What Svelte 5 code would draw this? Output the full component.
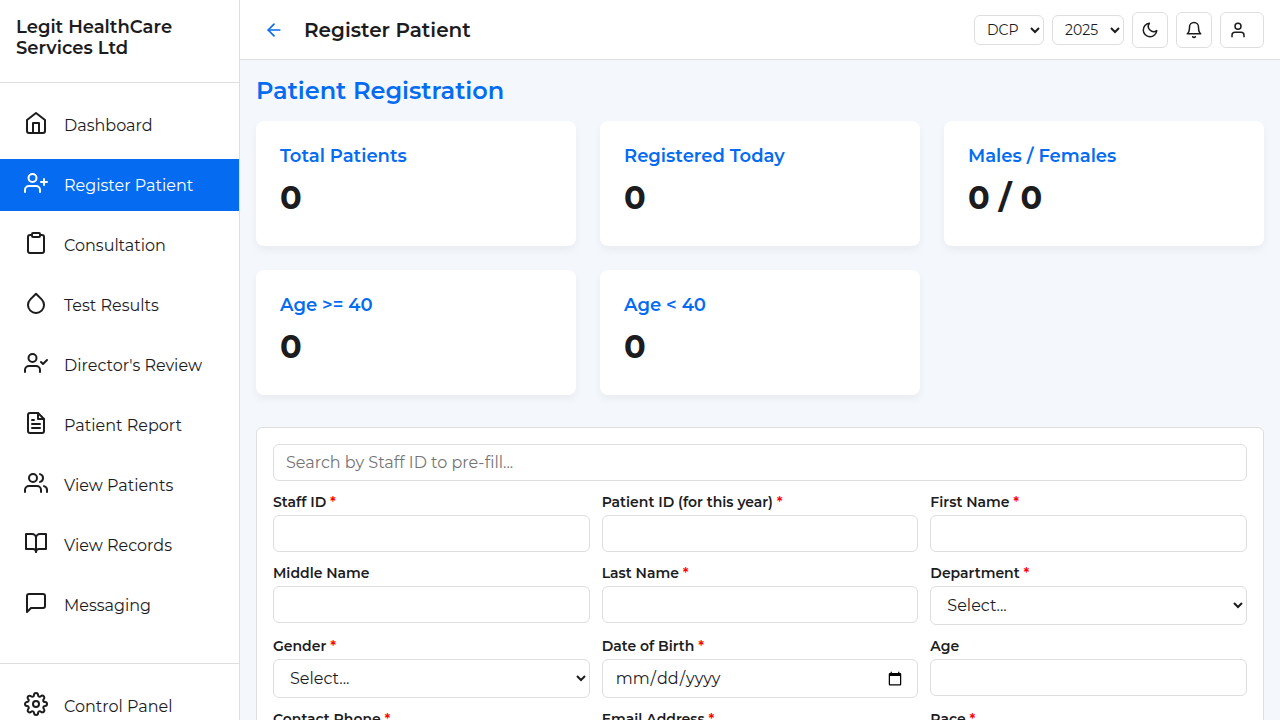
<script>
  const icons = {
    home: '<path d="M3 9l9-7 9 7v11a2 2 0 0 1-2 2H5a2 2 0 0 1-2-2z"/><polyline points="9 22 9 12 15 12 15 22"/>',
    userPlus: '<path d="M16 21v-2a4 4 0 0 0-4-4H5a4 4 0 0 0-4 4v2"/><circle cx="8.5" cy="7" r="4"/><line x1="20" y1="8" x2="20" y2="14"/><line x1="23" y1="11" x2="17" y2="11"/>',
    clipboard: '<path d="M16 4h2a2 2 0 0 1 2 2v14a2 2 0 0 1-2 2H6a2 2 0 0 1-2-2V6a2 2 0 0 1 2-2h2"/><rect x="8" y="2" width="8" height="4" rx="1" ry="1"/>',
    droplet: '<path d="M12 2.69l5.66 5.66a8 8 0 1 1-11.31 0z"/>',
    userCheck: '<path d="M16 21v-2a4 4 0 0 0-4-4H5a4 4 0 0 0-4 4v2"/><circle cx="8.5" cy="7" r="4"/><polyline points="17 11 19 13 23 9"/>',
    file: '<path d="M14 2H6a2 2 0 0 0-2 2v16a2 2 0 0 0 2 2h12a2 2 0 0 0 2-2V8z"/><polyline points="14 2 14 8 20 8"/><line x1="16" y1="13" x2="8" y2="13"/><line x1="16" y1="17" x2="8" y2="17"/><polyline points="10 9 9 9 8 9"/>',
    users: '<path d="M17 21v-2a4 4 0 0 0-4-4H5a4 4 0 0 0-4 4v2"/><circle cx="9" cy="7" r="4"/><path d="M23 21v-2a4 4 0 0 0-3-3.87"/><path d="M16 3.13a4 4 0 0 1 0 7.75"/>',
    book: '<path d="M2 3h6a4 4 0 0 1 4 4v14a3 3 0 0 0-3-3H2z"/><path d="M22 3h-6a4 4 0 0 0-4 4v14a3 3 0 0 1 3-3h7z"/>',
    message: '<path d="M21 15a2 2 0 0 1-2 2H7l-4 4V5a2 2 0 0 1 2-2h14a2 2 0 0 1 2 2z"/>',
    settings: '<circle cx="12" cy="12" r="3"/><path d="M19.4 15a1.65 1.65 0 0 0 .33 1.82l.06.06a2 2 0 0 1 0 2.83 2 2 0 0 1-2.83 0l-.06-.06a1.65 1.65 0 0 0-1.82-.33 1.65 1.65 0 0 0-1 1.51V21a2 2 0 0 1-2 2 2 2 0 0 1-2-2v-.09A1.65 1.65 0 0 0 9 19.4a1.65 1.65 0 0 0-1.82.33l-.06.06a2 2 0 0 1-2.83 0 2 2 0 0 1 0-2.83l.06-.06a1.65 1.65 0 0 0 .33-1.82 1.65 1.65 0 0 0-1.51-1H3a2 2 0 0 1-2-2 2 2 0 0 1 2-2h.09A1.65 1.65 0 0 0 4.6 9a1.65 1.65 0 0 0-.33-1.82l-.06-.06a2 2 0 0 1 0-2.83 2 2 0 0 1 2.83 0l.06.06a1.65 1.65 0 0 0 1.82.33H9a1.65 1.65 0 0 0 1-1.51V3a2 2 0 0 1 2-2 2 2 0 0 1 2 2v.09a1.65 1.65 0 0 0 1 1.51 1.65 1.65 0 0 0 1.82-.33l.06-.06a2 2 0 0 1 2.83 0 2 2 0 0 1 0 2.83l-.06.06a1.65 1.65 0 0 0-.33 1.82V9a1.65 1.65 0 0 0 1.51 1H21a2 2 0 0 1 2 2 2 2 0 0 1-2 2h-.09a1.65 1.65 0 0 0-1.51 1z"/>',
    back: '<line x1="19" y1="12" x2="5" y2="12"/><polyline points="12 19 5 12 12 5"/>',
    moon: '<path d="M21 12.79A9 9 0 1 1 11.21 3 7 7 0 0 0 21 12.79z"/>',
    bell: '<path d="M18 8A6 6 0 0 0 6 8c0 7-3 9-3 9h18s-3-2-3-9"/><path d="M13.73 21a2 2 0 0 1-3.46 0"/>',
    user: '<path d="M20 21v-2a4 4 0 0 0-4-4H8a4 4 0 0 0-4 4v2"/><circle cx="12" cy="7" r="4"/>'
  };

  const nav = [
    { label: 'Dashboard', icon: 'home' },
    { label: 'Register Patient', icon: 'userPlus' },
    { label: 'Consultation', icon: 'clipboard' },
    { label: 'Test Results', icon: 'droplet' },
    { label: "Director's Review", icon: 'userCheck' },
    { label: 'Patient Report', icon: 'file' },
    { label: 'View Patients', icon: 'users' },
    { label: 'View Records', icon: 'book' },
    { label: 'Messaging', icon: 'message' }
  ];
  const active = 'Register Patient';

  const stats = [
    { title: 'Total Patients', value: '0' },
    { title: 'Registered Today', value: '0' },
    { title: 'Males / Females', value: '0 / 0' },
    { title: 'Age >= 40', value: '0' },
    { title: 'Age < 40', value: '0' }
  ];

  const fields = [
    { id: 'staff-id', label: 'Staff ID', type: 'text', required: true },
    { id: 'patient-id', label: 'Patient ID (for this year)', type: 'text', required: true },
    { id: 'first-name', label: 'First Name', type: 'text', required: true },
    { id: 'middle-name', label: 'Middle Name', type: 'text' },
    { id: 'last-name', label: 'Last Name', type: 'text', required: true },
    { id: 'department', label: 'Department', type: 'select', required: true },
    { id: 'gender', label: 'Gender', type: 'select', required: true },
    { id: 'dob', label: 'Date of Birth', type: 'date', required: true },
    { id: 'age', label: 'Age', type: 'text' },
    { id: 'phone', label: 'Contact Phone', type: 'text', required: true },
    { id: 'email', label: 'Email Address', type: 'email', required: true },
    { id: 'race', label: 'Race', type: 'select', required: true }
  ];
</script>

{#snippet icon(name, size)}
  <svg class="icon" width={size} height={size} viewBox="0 0 24 24" aria-hidden="true">{@html icons[name]}</svg>
{/snippet}

<div class="app">
  <aside class="sidebar">
    <div class="brand"><h2>Legit HealthCare Services Ltd</h2></div>
    <nav class="nav">
      {#each nav as item}
        <a href="#{item.icon}" class="nav-item" class:active={item.label === active}>
          <span class="nav-icon">{@render icon(item.icon, 24)}</span>
          <span>{item.label}</span>
        </a>
      {/each}
    </nav>
    <div class="nav nav-footer">
      <a href="#settings" class="nav-item">
        <span class="nav-icon">{@render icon('settings', 24)}</span>
        <span>Control Panel</span>
      </a>
    </div>
  </aside>

  <div class="page">
    <header class="topbar">
      <button class="back" aria-label="Back">{@render icon('back', 20)}</button>
      <h1>Register Patient</h1>
      <div class="tools">
        <select aria-label="Client"><option>DCP</option></select>
        <select aria-label="Year"><option>2025</option></select>
        <button class="tool" aria-label="Theme">{@render icon('moon', 18)}</button>
        <button class="tool" aria-label="Notifications">{@render icon('bell', 18)}</button>
        <button class="tool account" aria-label="Account">{@render icon('user', 18)}</button>
      </div>
    </header>

    <main class="content">
      <h2 class="heading">Patient Registration</h2>

      <section class="stats">
        {#each stats as stat}
          <article class="card">
            <h3>{stat.title}</h3>
            <p>{stat.value}</p>
          </article>
        {/each}
      </section>

      <form class="form">
        <input class="control search" type="text" aria-label="Search by Staff ID" placeholder="Search by Staff ID to pre-fill..." />
        {#each fields as field}
          <div class="field">
            <label for={field.id}>{field.label}{#if field.required}<span class="required">&nbsp;*</span>{/if}</label>
            {#if field.type === 'select'}
              <select class="control tall" id={field.id}><option>Select...</option></select>
            {:else}
              <input class="control" class:tall={field.type === 'date'} id={field.id} type={field.type} />
            {/if}
          </div>
        {/each}
      </form>
    </main>
  </div>
</div>

<style>
  :global(body) {
    margin: 0;
  }

  .app {
    --primary: #056cf2;
    --text: #1c1c1e;
    --line: #dedede;
    display: flex;
    height: 100vh;
    overflow: hidden;
    color: var(--text);
    background: #f4f7fc;
    font: 400 16px/20px Montserrat, Inter, sans-serif;
  }

  .app :where(*) {
    box-sizing: border-box;
  }

  h1,
  h2,
  h3,
  p {
    margin: 0;
  }

  button,
  input,
  select {
    font-family: inherit;
    color: inherit;
    background: #fff;
  }

  .icon {
    display: block;
    fill: none;
    stroke: currentColor;
    stroke-width: 2;
    stroke-linecap: round;
    stroke-linejoin: round;
  }

  .sidebar {
    display: flex;
    flex: 0 0 240px;
    flex-direction: column;
    overflow-y: auto;
    scrollbar-width: none;
    background: #fff;
    border-right: 1px solid var(--line);
  }

  .brand {
    padding: 17px 16px 23px;
    border-bottom: 1px solid var(--line);
  }

  .brand h2 {
    font-size: 18px;
    font-weight: 600;
    line-height: 21px;
  }

  .nav {
    display: flex;
    flex-direction: column;
    gap: 8px;
    padding: 16px 0 32px;
  }

  .nav-footer {
    padding-bottom: 16px;
    border-top: 1px solid var(--line);
  }

  .nav-item {
    display: flex;
    align-items: flex-end;
    gap: 16px;
    padding: 12px 24px;
    color: inherit;
    line-height: 26px;
    text-decoration: none;
  }

  .nav-item.active {
    color: #fff;
    background: var(--primary);
  }

  .nav-icon {
    height: 28px;
  }

  .page {
    display: flex;
    flex: 1;
    flex-direction: column;
    min-width: 0;
  }

  .topbar {
    display: flex;
    flex-shrink: 0;
    align-items: center;
    gap: 12px;
    padding: 12px 16px 11px;
    background: #fff;
    border-bottom: 1px solid var(--line);
  }

  .topbar h1 {
    font-size: 20px;
    font-weight: 600;
    line-height: 24px;
  }

  .back {
    padding: 8px;
    color: var(--primary);
    border: 0;
  }

  .tools {
    display: flex;
    align-items: center;
    gap: 8px;
    margin-left: auto;
  }

  .tools select {
    height: 30px;
    padding: 4px 8px;
    font-size: 14px;
    border: 1px solid var(--line);
    border-radius: 6px;
  }

  .tool {
    padding: 8px;
    border: 1px solid var(--line);
    border-radius: 6px;
  }

  .account {
    padding-right: 16px;
  }

  .content {
    flex: 1;
    padding: 16px;
    overflow-y: auto;
    scrollbar-width: none;
  }

  .heading {
    margin-bottom: 16px;
    color: var(--primary);
    font-size: 24px;
    font-weight: 600;
    line-height: 29px;
  }

  .stats {
    display: grid;
    grid-template-columns: repeat(3, 1fr);
    gap: 24px;
    margin-bottom: 32px;
  }

  .card {
    padding: 24px 24px 30px;
    background: #fff;
    border-radius: 8px;
    box-shadow: 0 4px 8px rgba(0, 0, 0, 0.05);
  }

  .card h3 {
    margin-bottom: 12px;
    color: var(--primary);
    font-size: 18px;
    font-weight: 600;
    line-height: 22px;
  }

  .card p {
    font-size: 32px;
    font-weight: 700;
    line-height: 37px;
  }

  .form {
    display: grid;
    grid-template-columns: repeat(3, 1fr);
    gap: 12px;
    padding: 16px;
    background: #fff;
    border: 1px solid var(--line);
    border-radius: 6px;
  }

  .search {
    grid-column: 1 / -1;
  }

  .field {
    display: flex;
    flex-direction: column;
    gap: 4px;
  }

  label {
    font-size: 14px;
    font-weight: 600;
    line-height: 18px;
  }

  .required {
    color: #f00;
  }

  .control {
    width: 100%;
    height: 37px;
    padding: 8px 12px;
    font-size: 16px;
    border: 1px solid var(--line);
    border-radius: 6px;
  }

  .control.tall {
    height: 39px;
  }
</style>
